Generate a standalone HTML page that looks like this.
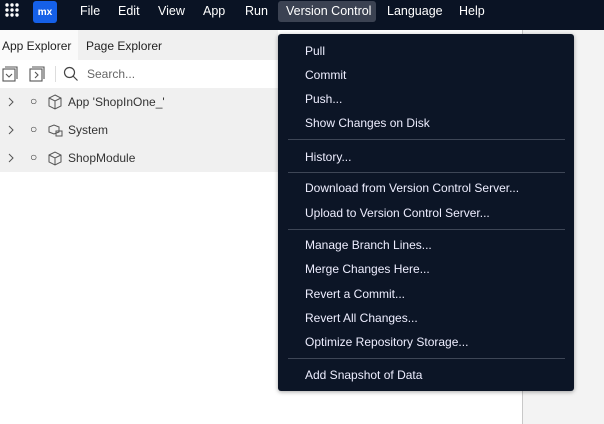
<!DOCTYPE html>
<html><head><style>
*{margin:0;padding:0;box-sizing:border-box}
body{width:604px;height:424px;overflow:hidden;background:#fff;font-family:"Liberation Sans",sans-serif;font-size:12px;position:relative}
.top{position:absolute;left:0;top:0;width:604px;height:30px;background:#0a1324;color:#fff}
.top span{position:absolute;top:8px;font-size:12.5px}
.logo{position:absolute;left:33px;top:1px;width:24px;height:22px;background:#1560e8;border-radius:3px;color:#fff;font-size:10px;font-weight:bold;text-align:center;line-height:24px}
.vc{position:absolute;left:278px;top:1px;width:98px;height:21px;background:#3b4252;border-radius:3px}
.tabs{position:absolute;left:0;top:30px;width:278px;height:30px;background:#f0f0f0}
.tabs span{position:absolute;top:9px;color:#222}
.tool{position:absolute;left:0;top:60px;width:278px;height:28px;background:#fff}
.tree{position:absolute;left:0;top:88px;width:278px;height:84px;background:#f0f0f0}
.row{position:absolute;left:0;height:28px;width:278px;color:#333}
.row span{position:absolute;top:7px}
.right{position:absolute;left:522px;top:30px;width:82px;height:394px;background:#f3f3f3;border-left:1px solid #c8c8c8}
.menu{position:absolute;left:278px;top:34px;width:296px;height:357px;background:#0c1526;border-radius:3px;box-shadow:0 1px 4px rgba(0,0,0,.35);color:#eef}
.menu div{position:absolute;left:27px;font-size:12px}
.sep{position:absolute;left:10px;width:277px;height:1px;background:#3e4656}
</style></head><body>
<div class="top">
<svg style="position:absolute;left:5px;top:3px" width="16" height="16" fill="#fff"><g><circle cx="2" cy="2" r="1.7"/><circle cx="7" cy="2" r="1.7"/><circle cx="12" cy="2" r="1.7"/><circle cx="2" cy="7" r="1.7"/><circle cx="7" cy="7" r="1.7"/><circle cx="12" cy="7" r="1.7"/><circle cx="2" cy="12" r="1.7"/><circle cx="7" cy="12" r="1.7"/><circle cx="12" cy="12" r="1.7"/></g></svg>
<div class="logo">mx</div>
<div class="vc"></div>
<span style="left:80px;top:4px">File</span><span style="left:118px;top:4px">Edit</span><span style="left:158px;top:4px">View</span><span style="left:203px;top:4px">App</span><span style="left:245px;top:4px">Run</span><span style="left:286px;top:4px">Version Control</span><span style="left:387px;top:4px">Language</span><span style="left:459px;top:4px">Help</span>
</div>
<div class="tabs"><div style="position:absolute;left:0;top:0;width:78px;height:30px;background:#fafafa"></div><span style="left:2px">App Explorer</span><span style="left:86px">Page Explorer</span></div>
<div class="tool">
<svg style="position:absolute;left:2px;top:6px" width="50" height="16" fill="none" stroke="#555" stroke-width="1.1"><rect x="1" y="3" width="12" height="12"/><path d="M3 1h12v12"/><path d="M4 8l3 3 3-3"/><rect x="28" y="3" width="12" height="12"/><path d="M30 1h12v12"/><path d="M33 6l3 3-3 3"/></svg>
<div style="position:absolute;left:55px;top:6px;width:1px;height:16px;background:#ddd"></div>
<svg style="position:absolute;left:63px;top:6px" width="16" height="16" fill="none" stroke="#444" stroke-width="1.2"><circle cx="6.5" cy="6.5" r="5"/><path d="M10 10l4.5 4.5"/></svg>
<span style="position:absolute;left:87px;top:7px;color:#666">Search...</span></div>
<div class="tree">
<div class="row" style="top:0"><svg style="position:absolute;left:7px;top:9px" width="8" height="10" fill="none" stroke="#555"><path d="M2 1l4 4-4 4"/></svg><span style="left:30px;top:6px">○</span><svg style="position:absolute;left:47px;top:6px" width="16" height="16" fill="none" stroke="#555"><path d="M8 1l6 3v8l-6 3-6-3V4zM2 4l6 3 6-3M8 7v8"/></svg><span style="left:68px">App 'ShopInOne_'</span></div>
<div class="row" style="top:28px"><svg style="position:absolute;left:7px;top:9px" width="8" height="10" fill="none" stroke="#555"><path d="M2 1l4 4-4 4"/></svg><span style="left:30px;top:6px">○</span><svg style="position:absolute;left:47px;top:6px" width="16" height="16" fill="none" stroke="#555"><path d="M2 5l5-2 5 2v5l-5 2-5-2z"/><rect x="9" y="9" width="6" height="5"/></svg><span style="left:68px">System</span></div>
<div class="row" style="top:56px"><svg style="position:absolute;left:7px;top:9px" width="8" height="10" fill="none" stroke="#555"><path d="M2 1l4 4-4 4"/></svg><span style="left:30px;top:6px">○</span><svg style="position:absolute;left:47px;top:6px" width="16" height="16" fill="none" stroke="#555"><path d="M2 5l6-3 6 3v7l-6 3-6-3zM2 5l6 3 6-3M8 8v7"/></svg><span style="left:68px">ShopModule</span></div>
</div>
<div class="right"></div>
<div class="menu">
<div style="top:10px">Pull</div><div style="top:34px">Commit</div><div style="top:58px">Push...</div><div style="top:82px">Show Changes on Disk</div>
<span class="sep" style="top:105px"></span>
<div style="top:116px">History...</div>
<span class="sep" style="top:138px"></span>
<div style="top:147px">Download from Version Control Server...</div><div style="top:172px">Upload to Version Control Server...</div>
<span class="sep" style="top:195px"></span>
<div style="top:204px">Manage Branch Lines...</div><div style="top:228px">Merge Changes Here...</div><div style="top:253px">Revert a Commit...</div><div style="top:277px">Revert All Changes...</div><div style="top:301px">Optimize Repository Storage...</div>
<span class="sep" style="top:324px"></span>
<div style="top:334px">Add Snapshot of Data</div>
</div>
</body></html>
